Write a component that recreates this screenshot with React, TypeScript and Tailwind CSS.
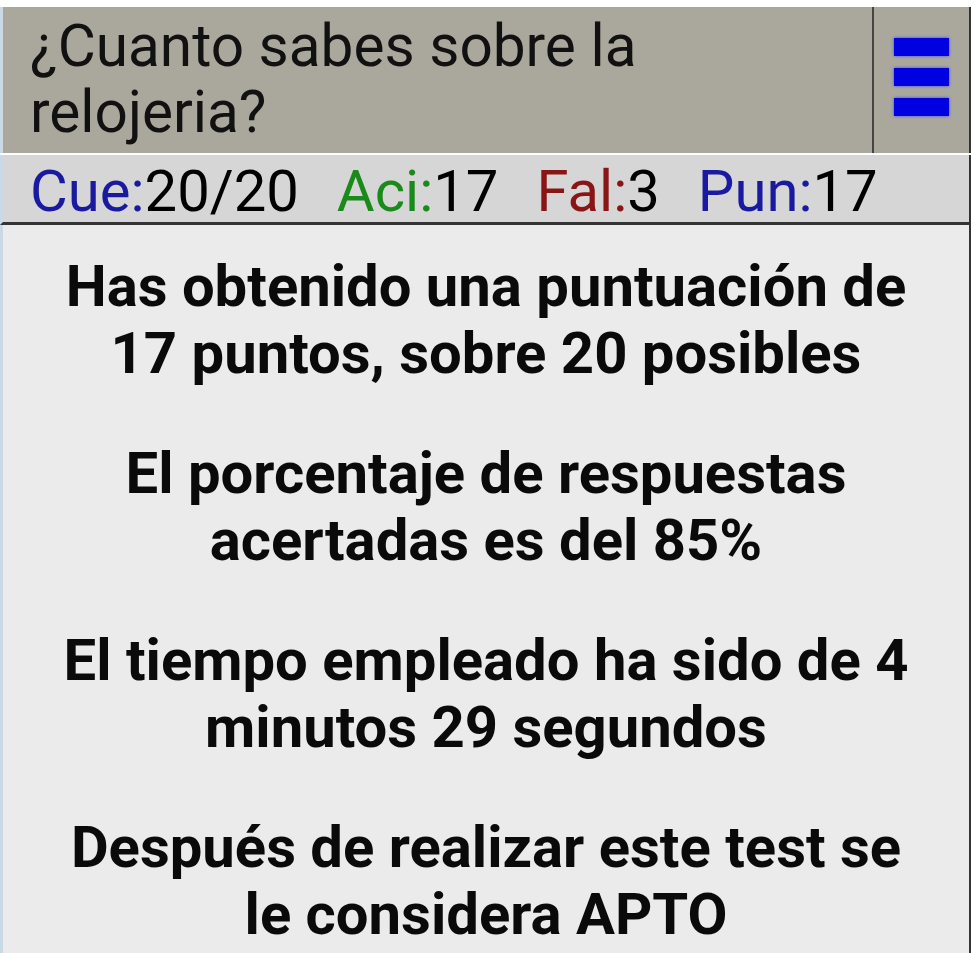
const RESULTS = [
  ["Has obtenido una puntuación de", "17 puntos, sobre 20 posibles"],
  ["El porcentaje de respuestas", "acertadas es del 85%"],
  ["El tiempo empleado ha sido de 4", "minutos 29 segundos"],
  ["Después de realizar este test se", "le considera APTO"],
];

function Stat({ label, value, color }: { label: string; value: string; color: string }) {
  return (
    <span className="mr-[38px]">
      <span className={color}>{label}:</span>
      <span className="text-black">{value}</span>
    </span>
  );
}

export default function App() {
  return (
    <div
      className="w-[971px] h-[953px] overflow-hidden bg-white pt-[7px] flex flex-col"
      style={{ fontFamily: "Roboto, 'Noto Sans', sans-serif" }}
    >
      <div className="flex h-[146px] bg-[#aaa89d] border-l-[3px] border-[#c9d9e6]">
        <h1 className="flex-1 pl-[27px] pt-[6px] text-[58.5px] leading-[66px] text-[#111]">
          ¿Cuanto sabes sobre la
          <br />
          relojeria?
        </h1>
        <button
          type="button"
          className="w-[99px] border-l-2 border-[#444] flex flex-col items-center pt-[31px] gap-[12px] border-r-2 border-r-[#333]"
        >
          <span className="block w-[55px] h-[18px] bg-[#0000e0] shadow-[0_0_3px_#4040ff]" />
          <span className="block w-[55px] h-[18px] bg-[#0000e0] shadow-[0_0_3px_#4040ff]" />
          <span className="block w-[55px] h-[18px] bg-[#0000e0] shadow-[0_0_3px_#4040ff]" />
        </button>
      </div>
      <div className="h-[2px] bg-white" />
      <div className="h-[70px] bg-[#d6d6d6] border-l-[3px] border-[#c9d9e6] border-r-2 border-r-[#333] border-b-[3px] border-b-[#333] pl-[27px] text-[58px] leading-[72px] whitespace-nowrap">
        <Stat label="Cue" value="20/20" color="text-[#1a1aa0]" />
        <Stat label="Aci" value="17" color="text-[#1a8a1a]" />
        <Stat label="Fal" value="3" color="text-[#8a1515]" />
        <Stat label="Pun" value="17" color="text-[#1a1aa0]" />
      </div>
      <main className="flex-1 bg-[#ebebeb] border-l-[3px] border-[#c9d9e6] border-r-2 border-r-[#333] pt-[28px] flex flex-col gap-[53px]">
        {RESULTS.map((lines) => (
          <p
            key={lines[0]}
            className="text-center font-bold text-[58px] leading-[67px] text-[#0a0a0a] whitespace-nowrap"
          >
            {lines[0]}
            <br />
            {lines[1]}
          </p>
        ))}
      </main>
    </div>
  );
}
